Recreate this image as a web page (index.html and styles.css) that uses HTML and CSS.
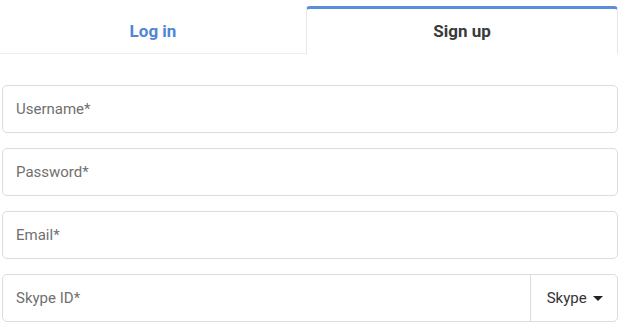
FILE: index.html
```html
<!DOCTYPE html>
<html>
<head>
    <title>Sign Up</title>
    <link rel="stylesheet" href="styles.css">
</head>
<body>
    <div class="tabs">
        <div class="tab">Log in</div>
        <div class="tab tab-active">Sign up</div>
    </div>

    <form id="signupForm" class="form">
        <input type="text" class="field" placeholder="Username*">
        <input type="password" class="field" placeholder="Password*">
        <input type="email" class="field" placeholder="Email*">
        <div class="field-group">
            <input type="text" class="field field-inner" placeholder="Skype ID*">
            <button type="button" class="messenger">Skype <span class="caret"></span></button>
        </div>
    </form>
</body>
</html>
```

FILE: styles.css
```css
body {
    margin: 0;
    font-family: Roboto, "Liberation Sans", Arial, sans-serif;
    background: #fff;
}

.tabs {
    display: flex;
    width: 618px;
}

.tab {
    width: 306px;
    padding-top: 9px;
    line-height: 44px;
    text-align: center;
    font-size: 17px;
    font-weight: 700;
    color: #4f86d6;
    border-bottom: 1px solid #ececec;
}

.tab-active {
    flex: 1;
    margin-top: 6px;
    padding-top: 0;
    padding-bottom: 1px;
    color: #3a3a3a;
    border: 1px solid #e6e6e6;
    border-top: 3px solid #5a8ed8;
    border-bottom: none;
    border-radius: 4px 4px 0 0;
}

.form {
    display: flex;
    flex-direction: column;
    gap: 15px;
    margin: 31px 2px 0 2px;
    width: 616px;
}

.field {
    box-sizing: border-box;
    height: 48px;
    padding: 0 13px;
    border: 1px solid #dcdcdc;
    border-radius: 5px;
    font-family: inherit;
    font-size: 15px;
    color: #333;
    outline: none;
}

.field::placeholder {
    color: #707070;
}

.field-group {
    display: flex;
    height: 48px;
    box-sizing: border-box;
    border: 1px solid #dcdcdc;
    border-radius: 5px;
}

.field-inner {
    flex: 1;
    height: 46px;
    border: none;
    border-radius: 5px 0 0 5px;
}

.messenger {
    width: 87px;
    padding: 0 0 0 2px;
    border: none;
    border-left: 1px solid #dcdcdc;
    border-radius: 0 5px 5px 0;
    background: #fff;
    font-family: inherit;
    font-size: 15px;
    color: #333;
    cursor: pointer;
}

.caret {
    display: inline-block;
    margin-left: 3px;
    vertical-align: 2px;
    border-left: 5px solid transparent;
    border-right: 5px solid transparent;
    border-top: 5px solid #222;
}
```
